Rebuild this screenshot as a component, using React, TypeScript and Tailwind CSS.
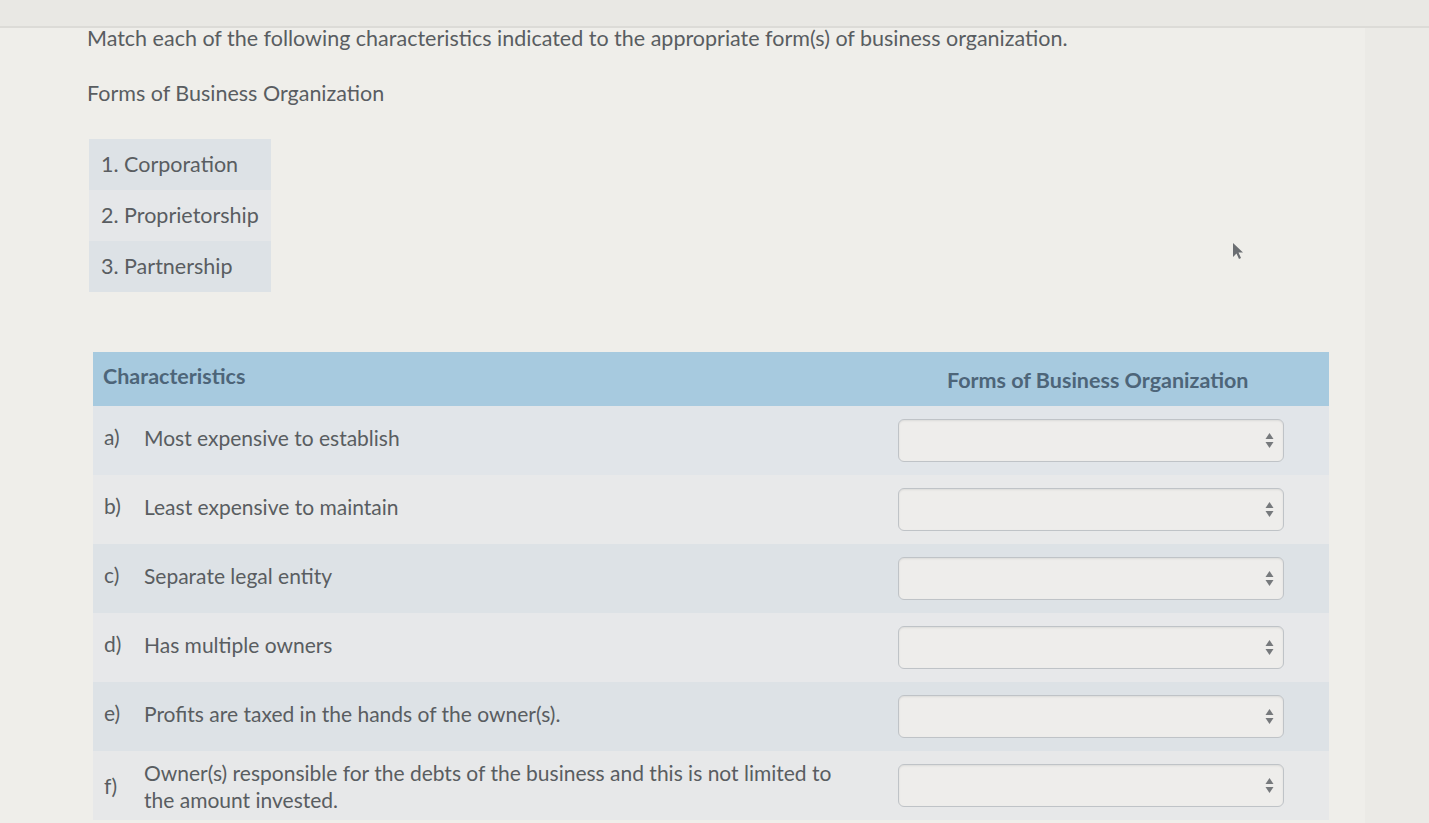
import React from "react";

const rows = [
  { l: "a)", t: ["Most expensive to establish"], bg: "bg-[#e1e5e9]" },
  { l: "b)", t: ["Least expensive to maintain"], bg: "bg-[#e8e9ea]" },
  { l: "c)", t: ["Separate legal entity"], bg: "bg-[#dde2e6]" },
  { l: "d)", t: ["Has multiple owners"], bg: "bg-[#e7e8ea]" },
  { l: "e)", t: ["Profits are taxed in the hands of the owner(s)."], bg: "bg-[#dde2e6]" },
  {
    l: "f)",
    t: ["Owner(s) responsible for the debts of the business and this is not limited to", "the amount invested."],
    bg: "bg-[#e7e8e9]",
  },
];

function Arrows() {
  return (
    <svg width="9" height="17" viewBox="0 0 9 17" className="shrink-0">
      <path d="M4.5 1 L8.5 7 L0.5 7 Z" fill="#76797c" />
      <path d="M0.5 10 L8.5 10 L4.5 16 Z" fill="#76797c" />
    </svg>
  );
}

export default function App() {
  return (
    <div
      className="w-[1429px] h-[823px] overflow-hidden bg-[#efeeea] text-[#595d61] flex flex-col"
      style={{ fontFamily: "Lato, 'Open Sans', sans-serif" }}
    >
      <div className="h-[28px] shrink-0 bg-[#e9e8e4] border-b-2 border-[#dcdbd7]" />
      <div className="flex-1 flex">
        <div className="flex-1 flex flex-col relative">
          <div className="pl-[87px] text-[21.5px] leading-[20px]">
            Match each of the following characteristics indicated to the appropriate form(s) of business organization.
          </div>
          <div className="pl-[87px] text-[21.5px] leading-[24px] mt-[33px]">Forms of Business Organization</div>
          <div className="ml-[89px] mt-[34px] w-[182px] flex flex-col text-[21.5px]">
            <div className="h-[51px] bg-[#dde2e6] flex items-center pl-[12px]">1. Corporation</div>
            <div className="h-[51px] bg-[#e5e7e9] flex items-center pl-[12px]">2. Proprietorship</div>
            <div className="h-[51px] bg-[#dde2e6] flex items-center pl-[12px]">3. Partnership</div>
          </div>
          <div className="ml-[93px] mt-[60px] w-[1236px] flex flex-col">
            <div className="h-[54px] bg-[#a7cadf] flex items-center text-[21.5px] font-bold text-[#4d6579]">
              <div className="w-[805px] pl-[10px] -mt-[6px]">Characteristics</div>
              <div className="flex-1 pl-[49px] mt-[2px]">Forms of Business Organization</div>
            </div>
            {rows.map((r) => (
              <div key={r.l} className={`h-[69px] ${r.bg} flex items-center text-[21px]`}>
                <div className={`w-[805px] flex items-center ${r.t.length === 1 ? "-mt-[7px]" : ""}`}>
                  <span className="w-[51px] pl-[11px] shrink-0">{r.l}</span>
                  <span className="leading-[27px]">
                    {r.t.map((x, i) => (
                      <div key={i}>{x}</div>
                    ))}
                  </span>
                </div>
                <div className="w-[386px] h-[43px] rounded-[6px] border-[1.5px] border-[#bfc3c7] bg-[#eeedeb] shadow-[inset_0_1px_2px_rgba(0,0,0,0.08)] flex items-center justify-end pr-[9px]">
                  <Arrows />
                </div>
              </div>
            ))}
          </div>
          <svg className="absolute left-[1232px] top-[214px]" width="14" height="20" viewBox="0 0 14 20">
            <path d="M1 1 L1 15 L4.5 11.5 L7 17 L9 16 L6.5 10.5 L11 10.5 Z" fill="#6b6e72" />
          </svg>
        </div>
        <div className="w-[64px] bg-[#ebeae6]" />
      </div>
    </div>
  );
}
